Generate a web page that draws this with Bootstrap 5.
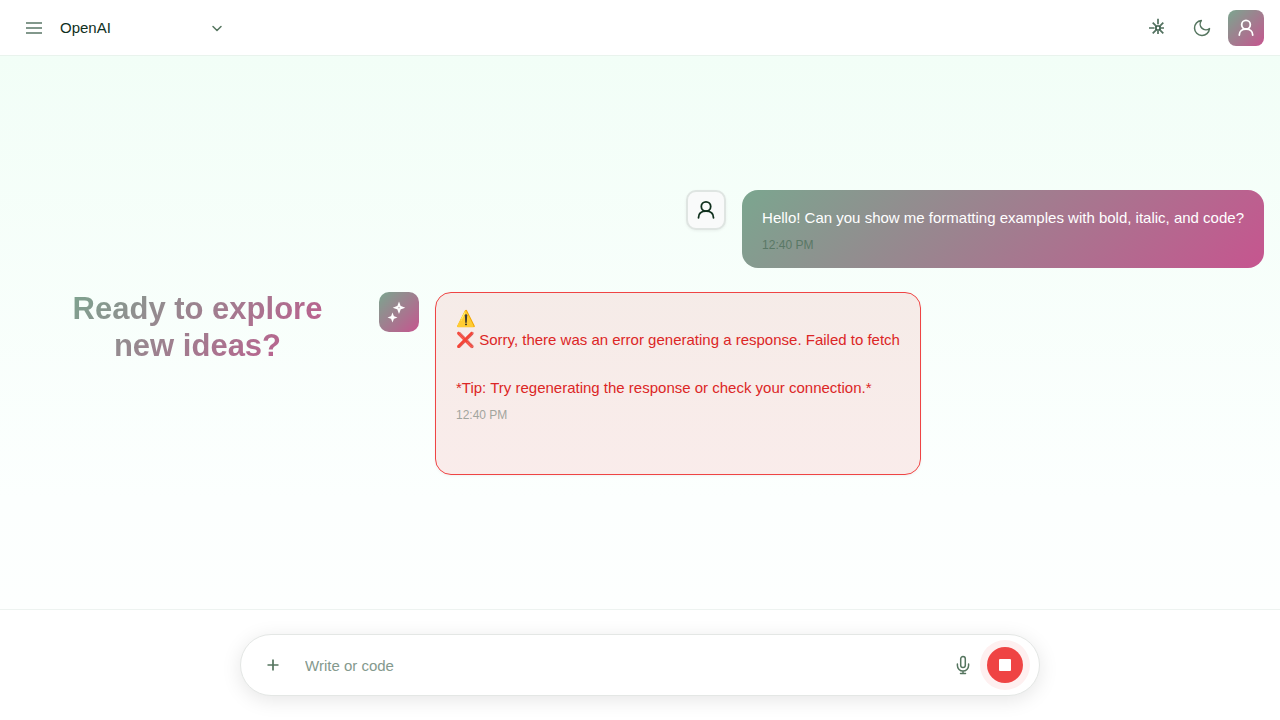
<!DOCTYPE html>
<html lang="en">
<head>
<meta charset="utf-8">
<meta name="viewport" content="width=device-width, initial-scale=1">
<title>Chat</title>
<link href="https://cdn.jsdelivr.net/npm/bootstrap@5.3.0/dist/css/bootstrap.min.css" rel="stylesheet">
<style>
:root { --ink: #10301d; --sage: #55755f; --brand: linear-gradient(135deg, #7ba68f 0%, #c6558f 100%); }
body { font-family: "Liberation Sans", Arial, sans-serif; font-size: 15px; line-height: 24px; color: var(--ink); background: #fff; }
svg { display: block; fill: none; stroke: currentColor; stroke-width: 2; stroke-linecap: round; stroke-linejoin: round; }
.topbar { min-height: 56px; background: #fff; border-bottom: 1px solid #e9f3ed; }
.tool { width: 36px; height: 36px; color: var(--sage); border-radius: 8px; }
.brand-fill { background: var(--brand); color: #fff; }
.model { width: 180px; }
.model select { appearance: none; border: 0; background: transparent; color: var(--ink); width: 100%; height: 36px; padding: 0 8px; }
.model svg { position: absolute; right: 9px; top: 12px; color: var(--sage); pointer-events: none; stroke-width: 1.5; }
.menu-icon { stroke: #82988c; stroke-linecap: butt; }
.sun-icon { stroke: #52715f; stroke-width: 1.7; stroke-linecap: butt; stroke-linejoin: miter; }
.moon-icon { stroke-width: 1.8; }
.person-icon { stroke-width: 1.8; }
.spark-icon { stroke-width: 1.8; stroke-linejoin: miter; }
.plus-icon { stroke-width: 1.7; stroke-linecap: butt; }
.mic-icon { stroke-width: 1.5; }
.chat { background: linear-gradient(180deg, #f2fef7 0%, #fcfffe 80%, #fdfffe 100%); }
.welcome { width: 363px; padding: 0 48px 12px; }
.welcome h1 { font-size: 31px; line-height: 37px; font-weight: 700; background: var(--brand); background-clip: text; -webkit-background-clip: text; color: transparent; }
.avatar { width: 40px; height: 40px; border-radius: 10px; }
.avatar-user { background: #f9fafa; border: 2px solid #dfe5e2; box-shadow: 0 1px 3px rgba(0,0,0,.06); }
.bubble { border-radius: 16px; }
.bubble-user { padding: 16px 20px 14px; }
.bubble-error { padding: 16px 20px 50px; background: rgba(239,68,68,.1); border: 1px solid #ef4444; color: #dc2626; box-shadow: 0 1px 3px rgba(0,0,0,.05); }
.warning-sign { font-size: 16px; line-height: 19px; }
.stamp { font-size: 12px; line-height: 18px; margin-top: 6px; color: #5a7866; }
.bubble-error .stamp { color: #a2a59e; }
.composer-bar { background: #fff; border-top: 1px solid #edf3f0; padding: 24px 16px; }
.composer { max-width: 800px; border: 1px solid #e4e7e5; border-radius: 31px; padding: 12px 16px 12px 14px; box-shadow: 0 4px 20px rgba(0,0,0,.1); background: #fff; }
.composer input { font-size: 15px; color: var(--ink); outline: 0; padding: 2px 14px 0; }
.composer input::placeholder { color: #84998d; opacity: 1; }
.composer-actions { gap: 6px; }
.stop { width: 36px; height: 36px; background: #ef4444; box-shadow: 0 0 0 7px #fef0f0; }
.stop span { width: 12px; height: 12px; border-radius: 1px; }
</style>
</head>
<body class="d-flex flex-column min-vh-100">
<header class="topbar d-flex align-items-center justify-content-between px-3">
  <div class="d-flex align-items-center">
    <button class="tool btn border-0 p-0 d-flex align-items-center justify-content-center" aria-label="Menu">
      <svg class="menu-icon" width="20" height="20" viewBox="0 0 20 20"><path d="M2 5h16M2 10h16M2 15h16"/></svg>
    </button>
    <div class="model position-relative">
      <select aria-label="Model"><option>OpenAI</option></select>
      <svg width="12" height="12" viewBox="0 0 12 12"><path d="M2 4.5l4 4 4-4"/></svg>
    </div>
  </div>
  <div class="d-flex align-items-center gap-2">
    <button class="tool btn border-0 p-0 d-flex align-items-center justify-content-center" aria-label="Light mode">
      <svg class="sun-icon" width="20" height="20" viewBox="0 0 20 20"><path stroke="#345844" d="M8 8h4v4H8z"/><path d="M10 .8v5.500M1 10h5.500M13 10h3M10 13v3M4.700 4.700l3 3M15.300 4.700l-3 3M4.700 15.300l3-3M15.300 15.300l-3-3"/></svg>
    </button>
    <button class="tool btn border-0 p-0 d-flex align-items-center justify-content-center" aria-label="Dark mode">
      <svg class="moon-icon" width="20" height="20" viewBox="0 0 24 24"><path d="M21 12.800A9 9 0 1 1 11.200 3a7 7 0 0 0 9.800 9.800z"/></svg>
    </button>
    <button class="tool brand-fill btn border-0 p-0 d-flex align-items-center justify-content-center" aria-label="Account">
      <svg class="person-icon" width="20" height="20" viewBox="0 0 20 20"><circle cx="10" cy="6.7" r="4.3"/><path d="M3.300 17c0-3.800 2.800-6 6.700-6s6.700 2.200 6.700 6"/></svg>
    </button>
  </div>
</header>

<main class="chat flex-grow-1 d-flex align-items-center px-3">
  <section class="welcome flex-shrink-0 text-center"><h1 class="m-0">Ready to explore new ideas?</h1></section>
  <section class="flex-grow-1 d-flex flex-column gap-4">
    <article class="d-flex justify-content-end align-items-start gap-3">
      <div class="avatar avatar-user d-flex align-items-center justify-content-center flex-shrink-0">
        <svg class="person-icon" width="20" height="20" viewBox="0 0 20 20"><circle cx="10" cy="6.5" r="4.700"/><path d="M2.500 17.800c0-4.300 3.100-6.600 7.500-6.600s7.500 2.300 7.500 6.600"/></svg>
      </div>
      <div class="bubble bubble-user brand-fill">
        <p class="m-0">Hello! Can you show me formatting examples with bold, italic, and code?</p>
        <div class="stamp">12:40 PM</div>
      </div>
    </article>
    <article class="d-flex align-items-start gap-3">
      <div class="avatar brand-fill d-flex align-items-center justify-content-center flex-shrink-0">
        <svg class="spark-icon" width="24" height="24" viewBox="0 0 24 24"><path d="M12 4l1 2.700L15.700 7.700 13 8.700 12 11.400 11 8.700 8.300 7.700 11 6.700z"/><path d="M5.500 15l.7 1.800 1.800.7-1.800.7-.7 1.800-.7-1.800-1.800-.7 1.800-.7z"/></svg>
      </div>
      <div class="bubble bubble-error">
        <div class="warning-sign">⚠️</div>
        <p class="m-0">❌ Sorry, there was an error generating a response. Failed to fetch<br><br>*Tip: Try regenerating the response or check your connection.*</p>
        <div class="stamp">12:40 PM</div>
      </div>
    </article>
  </section>
</main>

<footer class="composer-bar">
  <form class="composer mx-auto d-flex align-items-center">
    <button type="button" class="tool btn border-0 p-0 d-flex align-items-center justify-content-center" aria-label="Attach">
      <svg class="plus-icon" width="16" height="16" viewBox="0 0 16 16"><path d="M8 2.500v11M2.500 8h11"/></svg>
    </button>
    <input class="flex-grow-1 border-0 bg-transparent" type="text" placeholder="Write or code" aria-label="Message">
    <div class="composer-actions d-flex align-items-center">
      <button type="button" class="tool btn border-0 p-0 d-flex align-items-center justify-content-center" aria-label="Voice input">
        <svg class="mic-icon" width="20" height="20" viewBox="0 0 20 20"><rect x="7.700" y="1.500" width="4.600" height="11" rx="2.300"/><path d="M4.400 9v1.500a5.600 5.600 0 0 0 11.200 0V9M10 16v2.500M7.500 18.500h5"/></svg>
      </button>
      <button type="button" class="stop btn border-0 rounded-circle p-0 d-flex align-items-center justify-content-center" aria-label="Stop"><span class="bg-white"></span></button>
    </div>
  </form>
</footer>
<script src="https://cdn.jsdelivr.net/npm/bootstrap@5.3.0/dist/js/bootstrap.bundle.min.js"></script>
</body>
</html>
